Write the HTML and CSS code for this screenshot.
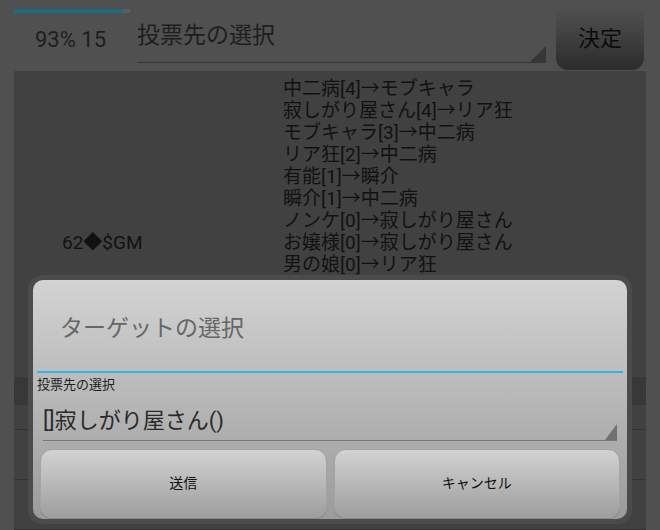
FILE: index.html
```html
<!DOCTYPE html>
<html lang="ja">
<head>
    <meta charset="UTF-8">
    <title>投票先の選択</title>
    <link rel="stylesheet" href="styles.css">
</head>
<body>
    <div class="screen">
        <header class="topbar">
            <div class="status">
                <div class="progress"><div class="progress-fill" style="width: 94%"></div></div>
                <div class="count">93% 15</div>
            </div>
            <div class="spinner top-spinner">投票先の選択</div>
            <button class="decide-btn">決定</button>
        </header>

        <main class="content">
            <div class="log">
                <div class="log-left">62◆$GM</div>
                <div class="log-right">
                    <p>中二病[4]→モブキャラ</p>
                    <p>寂しがり屋さん[4]→リア狂</p>
                    <p>モブキャラ[3]→中二病</p>
                    <p>リア狂[2]→中二病</p>
                    <p>有能[1]→瞬介</p>
                    <p>瞬介[1]→中二病</p>
                    <p>ノンケ[0]→寂しがり屋さん</p>
                    <p>お嬢様[0]→寂しがり屋さん</p>
                    <p>男の娘[0]→リア狂</p>
                </div>
            </div>
            <ul class="player-list">
                <li class="player-row head"></li>
                <li class="player-row"></li>
                <li class="player-row"><span class="more">⋮</span></li>
            </ul>
        </main>

        <div class="dialog">
            <div class="dialog-body">
                <div class="dialog-title">ターゲットの選択</div>
                <div class="dialog-divider"></div>
                <div class="dialog-label">投票先の選択</div>
                <div class="spinner dialog-spinner">[]寂しがり屋さん()</div>
                <div class="dialog-buttons">
                    <button class="dialog-btn">送信</button>
                    <button class="dialog-btn">キャンセル</button>
                </div>
            </div>
        </div>
    </div>
</body>
</html>
```

FILE: styles.css
```css
* {
    margin: 0;
    padding: 0;
    box-sizing: border-box;
    font-family: Roboto, "Noto Sans CJK JP", sans-serif;
}

body {
    background-color: #505050;
    width: 660px;
    height: 530px;
    overflow: hidden;
}

.screen {
    position: relative;
    height: 530px;
    display: flex;
    flex-direction: column;
}

/* top bar */
.topbar {
    display: flex;
    align-items: flex-start;
    height: 74px;
    padding-left: 14px;
}

.status {
    width: 116px;
    padding-top: 9px;
}

.progress {
    height: 4px;
    background-color: #5c5c5c;
}

.progress-fill {
    height: 100%;
    background-color: #1d6a82;
}

.count {
    margin-top: 14px;
    padding-left: 21px;
    font-size: 22px;
    line-height: 26px;
    color: #1e1e1e;
}

.spinner {
    position: relative;
}

.spinner::after {
    content: "";
    position: absolute;
    right: 0;
    bottom: 0;
    width: 16px;
    height: 16px;
    clip-path: polygon(100% 0, 100% 100%, 0 100%);
}

.top-spinner {
    width: 409px;
    height: 63px;
    margin-left: 7px;
    padding-top: 22px;
    font-size: 23px;
    line-height: 28px;
    color: #1e1e1e;
    border-bottom: 1px solid #363636;
}

.top-spinner::after {
    background-color: #363636;
}

.decide-btn {
    width: 88px;
    height: 62px;
    margin: 8px 0 0 10px;
    border: none;
    border-radius: 0 0 12px 12px;
    background: linear-gradient(#505050, #2c2c2c);
    color: #0c0c0c;
    font-size: 22px;
    padding-bottom: 6px;
}

/* log area */
.content {
    flex: 1;
    margin: 0 14px;
    background-color: #414141;
    display: flex;
    flex-direction: column;
}

.log {
    display: flex;
    height: 306px;
    padding-top: 7px;
    font-size: 19px;
    line-height: 22px;
    color: #111;
}

.log-left {
    width: 269px;
    padding: 154px 0 0 48px;
}

.log-right p {
    white-space: nowrap;
}

.player-list {
    list-style: none;
}

.player-row {
    height: 50px;
    border-bottom: 1px solid #333;
    position: relative;
}

.player-row.head {
    height: 53px;
    background: linear-gradient(#383838 0, #383838 28px, #414141 28px);
}

.more {
    position: absolute;
    right: 8px;
    top: 4px;
    font-size: 16px;
    color: #1a1a1a;
}

/* dialog */
.dialog {
    position: absolute;
    left: 28px;
    top: 275px;
    width: 604px;
    height: 249px;
    padding: 5px;
    border-radius: 14px;
    background-color: #4b4b4b;
}

.dialog-body {
    height: 100%;
    border-radius: 10px;
    background: linear-gradient(#d3d3d3, #9b9b9b);
    display: flex;
    flex-direction: column;
}

.dialog-title {
    height: 91px;
    padding: 35px 0 0 27px;
    font-size: 23px;
    line-height: 28px;
    color: #666;
}

.dialog-divider {
    height: 2px;
    margin: 0 4px;
    background-color: #33b5e5;
}

.dialog-label {
    margin: 3px 4px 0;
    font-size: 13px;
    line-height: 18px;
    color: #222;
}

.dialog-spinner {
    margin: 0 10px;
    height: 47px;
    padding-top: 13px;
    font-size: 22px;
    line-height: 28px;
    color: #2a2a2a;
    border-bottom: 1px solid #777;
}

.dialog-spinner::after {
    width: 12px;
    height: 16px;
    background-color: #707070;
}

.dialog-buttons {
    display: flex;
    gap: 7px;
    margin-top: 8px;
    padding: 0 7px;
    height: 69px;
}

.dialog-btn {
    flex: 1;
    border: 1px solid #a4a4a4;
    border-radius: 12px;
    background: linear-gradient(#d2d2d2, #9e9e9e);
    box-shadow: 0 1px 1px rgba(0, 0, 0, 0.15);
    font-size: 14px;
    color: #111;
    padding-bottom: 4px;
}
```
